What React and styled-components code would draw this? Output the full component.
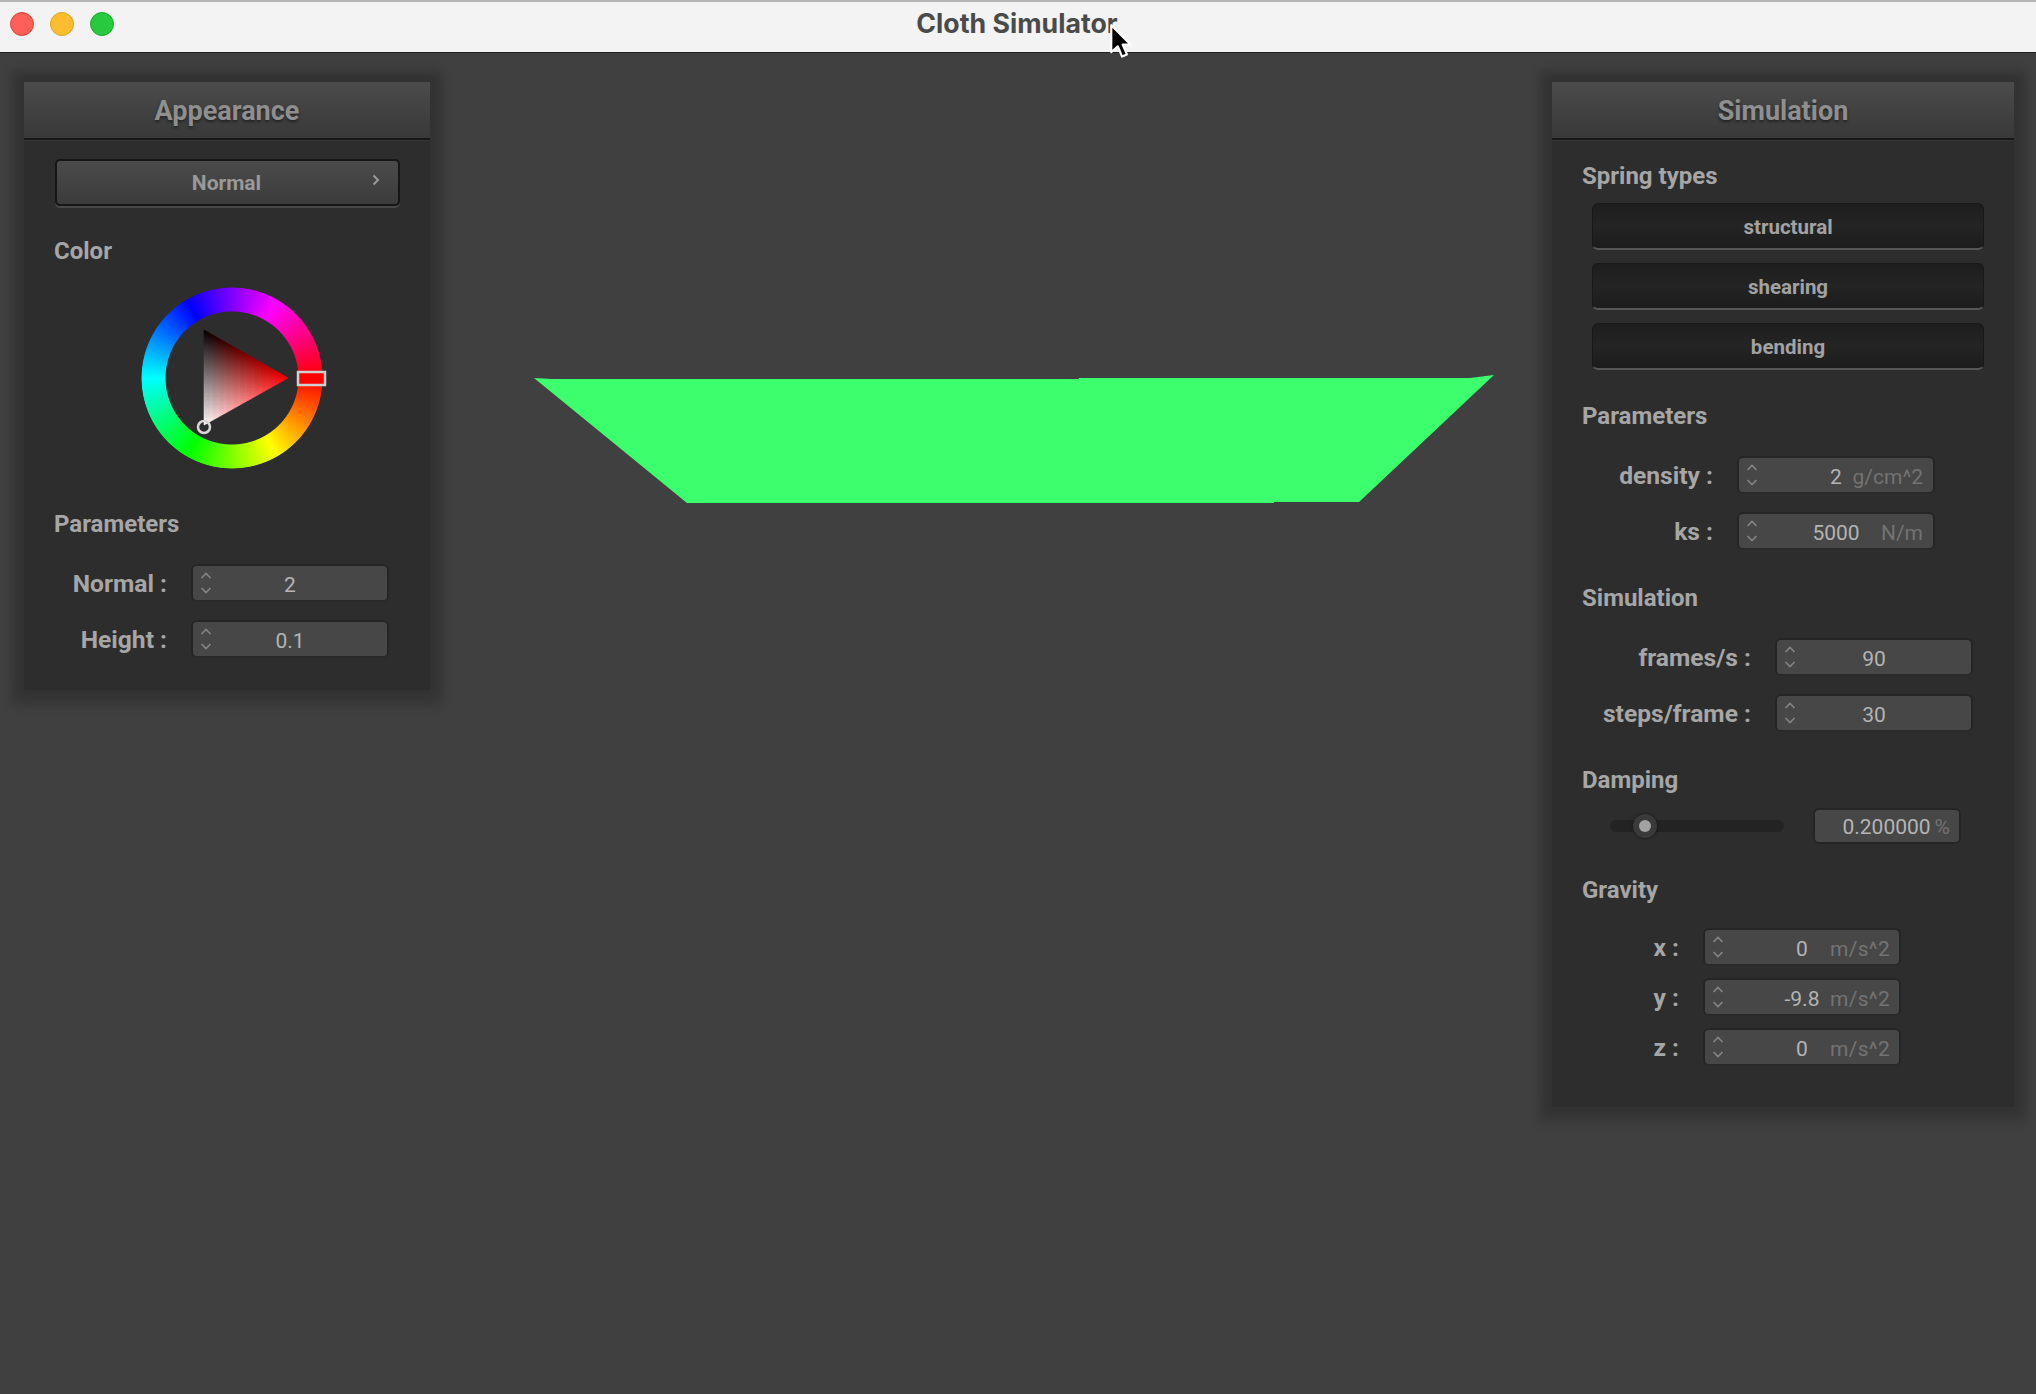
import React from "react";
import styled, { createGlobalStyle } from "styled-components";

const Global = createGlobalStyle`
  html, body { margin: 0; padding: 0; background: #404040; }
  body { font-family: Roboto, "Liberation Sans", sans-serif; }
`;

const Screen = styled.div`
  position: relative;
  width: 2036px;
  height: 1394px;
  overflow: hidden;
  background: #404040;
`;

const TitleBar = styled.header`
  position: relative;
  box-sizing: border-box;
  height: 53px;
  display: flex;
  align-items: center;
  justify-content: center;
  background: #f3f3f3;
  border-top: 2px solid #b4b4b4;
  border-bottom: 1px solid #1e1e1e;
`;

const Lights = styled.div`
  position: absolute;
  left: 10px;
  top: 10px;
  display: flex;
  gap: 16px;
`;

const Light = styled.span`
  width: 24px;
  height: 24px;
  box-sizing: border-box;
  border-radius: 50%;
  background: ${(p) => p.$color};
  border: 1px solid ${(p) => p.$edge};
`;

const WindowTitle = styled.h1`
  margin: 0 2px 9px 0;
  font: 700 26.7px/30px Inter, "Liberation Sans", sans-serif;
  color: #4a4a4a;
`;

const Viewport = styled.main`
  position: relative;
  height: 1341px;
  box-sizing: border-box;
  padding: 29px 22px 0 24px;
  display: flex;
  justify-content: space-between;
  align-items: flex-start;
`;

const Cloth = styled.svg`
  position: absolute;
  left: 0;
  top: 0;
  width: 2036px;
  height: 1341px;
`;

const Panel = styled.section`
  position: relative;
  width: ${(p) => p.$width}px;
  background: #2d2d2d;
  border-radius: 2px;
  box-shadow: 0 0 8px 7px rgba(0, 0, 0, 0.11), 0 2px 9px 15px rgba(0, 0, 0, 0.12);
`;

const PanelHeader = styled.h2`
  box-sizing: border-box;
  margin: 0;
  height: 58px;
  padding-top: 2px;
  display: flex;
  align-items: center;
  justify-content: center;
  background: linear-gradient(#4b4b4b, #393939);
  border-bottom: 2px solid #171717;
  box-shadow: 0 1px 0 #373737;
  font: 700 27px/1 Roboto, sans-serif;
  color: #8f8f8f;
  text-shadow: 0 2px 3px #222;
`;

const PanelBody = styled.div`
  padding: ${(p) => p.$top}px 31px ${(p) => p.$bottom}px;
`;

const SectionLabel = styled.div`
  margin: ${(p) => p.$top}px 0 ${(p) => p.$bottom}px -1px;
  font: 700 24px/26px Roboto, sans-serif;
  color: #a6a6a6;
`;

const Popup = styled.div`
  position: relative;
  box-sizing: border-box;
  width: 345px;
  height: 47px;
  padding: 2px 2px 0 0;
  display: flex;
  align-items: center;
  justify-content: center;
  border: 2px solid #161616;
  border-radius: 5px;
  background: linear-gradient(#4b4b4b, #3b3b3b);
  box-shadow: 0 2px 0 #484848;
  font: 700 21px/1 Roboto, sans-serif;
  color: #999;
`;

const PopupChevron = styled.svg`
  position: absolute;
  right: 18px;
  top: 13px;
  width: 8px;
  height: 12px;
`;

const WheelBox = styled.div`
  position: relative;
  width: 182px;
  height: 182px;
  margin-left: 86px;
`;

const Ring = styled.div`
  position: absolute;
  inset: 0;
  border-radius: 50%;
  background: conic-gradient(from 90deg, #f00, #ff0, #0f0, #0ff, #00f, #f0f, #f00);
  -webkit-mask: radial-gradient(circle closest-side, transparent 66px, #000 67px, #000 90px, transparent 91px);
  mask: radial-gradient(circle closest-side, transparent 66px, #000 67px, #000 90px, transparent 91px);
`;

const WheelArt = styled.svg`
  position: absolute;
  inset: 0;
  overflow: visible;
`;

const Row = styled.div`
  display: flex;
  align-items: center;
  gap: 24px;
  margin-bottom: ${(p) => p.$after || 0}px;
`;

const RowLabel = styled.label`
  width: ${(p) => p.$width + 1}px;
  padding-top: 1px;
  text-align: right;
  font: 700 24.6px/26px Roboto, sans-serif;
  color: #a6a6a6;
  white-space: nowrap;
`;

const Field = styled.div`
  box-sizing: border-box;
  width: ${(p) => p.$width || 198}px;
  height: ${(p) => p.$height || 38}px;
  padding: 0 10px;
  display: grid;
  grid-template-columns: 1fr auto 1fr;
  align-items: center;
  background: #474747;
  border: 2px solid #252525;
  border-bottom-color: #2a2a2a;
  border-radius: 6px;
  font: 400 21px/1 Roboto, sans-serif;
  color: #b4b4b4;
`;

const Spinner = styled.svg`
  width: 12px;
  height: 24px;
  margin-left: -3px;
`;

const Value = styled.span`
  padding-top: 4px;
`;

const Unit = styled.span`
  justify-self: end;
  padding-top: 4px;
  margin-right: ${(p) => (p.$spread ? -1 : 0)}px;
  letter-spacing: ${(p) => p.$spread || 0}px;
  color: #737373;
`;

const SpringButton = styled.button`
  display: block;
  box-sizing: border-box;
  width: 392px;
  height: 47px;
  margin: 0 0 13px 9px;
  padding: 2px 0 0;
  background: linear-gradient(#1e1e1e, #242424 50%, #1c1c1c);
  border: 1px solid #181818;
  border-bottom: 2px solid #565656;
  border-radius: 6px;
  font: 700 20.5px/1 Roboto, sans-serif;
  color: #a2a2a2;
  &:last-of-type { margin-bottom: 0; }
`;

const SliderRow = styled.div`
  display: flex;
  align-items: center;
  margin-left: 27px;
  gap: 29px;
`;

const Track = styled.div`
  position: relative;
  width: 174px;
  height: 12px;
  border-radius: 6px;
  background: #232323;
`;

const Thumb = styled.span`
  position: absolute;
  left: 23px;
  top: -6px;
  box-sizing: border-box;
  width: 24px;
  height: 24px;
  display: grid;
  place-items: center;
  border-radius: 50%;
  background: #3a3a3a;
  box-shadow: 0 0 3px #151515;
  &::after {
    content: "";
    width: 12px;
    height: 12px;
    border-radius: 50%;
    background: #a2a2a2;
  }
`;

const PercentField = styled.div`
  box-sizing: border-box;
  width: 148px;
  height: 36px;
  padding: 3px 9px 0;
  display: flex;
  justify-content: flex-end;
  align-items: center;
  gap: 4px;
  background: #474747;
  border: 2px solid #252525;
  border-radius: 6px;
  font: 400 21px/1 Roboto, sans-serif;
  color: #b4b4b4;
`;

const Percent = styled.span`
  color: #737373;
`;

const Cursor = styled.svg`
  position: absolute;
  left: 1109px;
  top: 23px;
  width: 24px;
  height: 39px;
`;

const triangleCells = () => {
  const K = [63, 43], R = [147, 91], W = [63, 138];
  const n = 36;
  const cells = [];
  const at = (i, j) => {
    const a = i / n, b = j / n, c = 1 - a - b;
    return [K[0] * c + R[0] * a + W[0] * b, K[1] * c + R[1] * a + W[1] * b];
  };
  const col = (i, j) => {
    const a = i / n, b = j / n;
    return `rgb(${Math.round(255 * (a + b))},${Math.round(255 * b)},${Math.round(255 * b)})`;
  };
  for (let i = 0; i < n; i++) {
    for (let j = 0; j < n - i; j++) {
      const pts = [at(i, j), at(i + 1, j), at(i, j + 1)];
      const fill = col(i + 1 / 3, j + 1 / 3);
      cells.push(<polygon key={`a${i}-${j}`} points={pts.map((p) => p.join(",")).join(" ")} fill={fill} stroke={fill} strokeWidth="0.6" />);
      if (i + j < n - 1) {
        const q = [at(i + 1, j), at(i + 1, j + 1), at(i, j + 1)];
        const f2 = col(i + 2 / 3, j + 2 / 3);
        cells.push(<polygon key={`b${i}-${j}`} points={q.map((p) => p.join(",")).join(" ")} fill={f2} stroke={f2} strokeWidth="0.6" />);
      }
    }
  }
  return cells;
};

const Stepper = () => (
  <Spinner viewBox="0 0 12 24" fill="none" stroke="#858585" strokeWidth="1.6">
    <path d="M1.5 7 L6 2.5 L10.5 7" />
    <path d="M1.5 17 L6 21.5 L10.5 17" />
  </Spinner>
);

const NumberField = ({ value, unit, spread }) => (
  <Field>
    <Stepper />
    <Value>{value}</Value>
    {unit ? <Unit $spread={spread}>{unit}</Unit> : <span />}
  </Field>
);

const ParamRow = ({ label, labelWidth, after, value, unit, spread }) => (
  <Row $after={after}>
    <RowLabel $width={labelWidth}>{label}</RowLabel>
    <NumberField value={value} unit={unit} spread={spread} />
  </Row>
);

export default function App() {
  return (
    <Screen>
      <Global />
      <TitleBar>
        <Lights>
          <Light $color="#ff5f57" $edge="#e0443e" />
          <Light $color="#febc2e" $edge="#dea123" />
          <Light $color="#28c840" $edge="#1aab29" />
        </Lights>
        <WindowTitle>Cloth Simulator</WindowTitle>
      </TitleBar>
      <Viewport>
        <Cloth viewBox="0 0 2036 1341">
          <polygon
            fill="#3cff6e"
            points="534,325 552,326 1079,326 1079,325 1470,325 1494,322 1359,449 1274,449 1274,450 687,450"
          />
        </Cloth>
        <Panel $width={406}>
          <PanelHeader>Appearance</PanelHeader>
          <PanelBody $top={19} $bottom={32}>
            <Popup>
              Normal
              <PopupChevron viewBox="0 0 8 12" fill="none" stroke="#9a9a9a" strokeWidth="2">
                <path d="M1.5 1.5 L6 6 L1.5 10.5" />
              </PopupChevron>
            </Popup>
            <SectionLabel $top={32} $bottom={23}>Color</SectionLabel>
            <WheelBox>
              <Ring />
              <WheelArt width="182" height="182" viewBox="0 0 182 182">
                {triangleCells()}
                <circle cx="63" cy="140" r="6" fill="none" stroke="#d8d8d8" strokeWidth="2.5" />
                <rect x="157" y="85" width="27" height="13" fill="#f00" stroke="#d0d0d0" strokeWidth="2.5" />
              </WheelArt>
            </WheelBox>
            <SectionLabel $top={42} $bottom={27}>Parameters</SectionLabel>
            <ParamRow label="Normal :" labelWidth={111} value="2" after={18} />
            <ParamRow label="Height :" labelWidth={111} value="0.1" />
          </PanelBody>
        </Panel>
        <Panel $width={462}>
          <PanelHeader>Simulation</PanelHeader>
          <PanelBody $top={23} $bottom={41}>
            <SectionLabel $top={0} $bottom={14}>Spring types</SectionLabel>
            <SpringButton>structural</SpringButton>
            <SpringButton>shearing</SpringButton>
            <SpringButton>bending</SpringButton>
            <SectionLabel $top={33} $bottom={27}>Parameters</SectionLabel>
            <ParamRow label="density :" labelWidth={129} value="2" unit="g/cm^2" after={18} />
            <ParamRow label="ks :" labelWidth={129} value="5000" unit="N/m" />
            <SectionLabel $top={35} $bottom={27}>Simulation</SectionLabel>
            <ParamRow label="frames/s :" labelWidth={167} value="90" after={18} />
            <ParamRow label="steps/frame :" labelWidth={167} value="30" />
            <SectionLabel $top={35} $bottom={15}>Damping</SectionLabel>
            <SliderRow>
              <Track><Thumb /></Track>
              <PercentField>0.200000<Percent>%</Percent></PercentField>
            </SliderRow>
            <SectionLabel $top={33} $bottom={25}>Gravity</SectionLabel>
            <ParamRow label="x :" labelWidth={95} value="0" unit="m/s^2" spread={0.3} after={12} />
            <ParamRow label="y :" labelWidth={95} value="-9.8" unit="m/s^2" spread={0.3} after={12} />
            <ParamRow label="z :" labelWidth={95} value="0" unit="m/s^2" spread={0.3} />
          </PanelBody>
        </Panel>
      </Viewport>
      <Cursor viewBox="0 0 22 36">
        <path
          d="M2 2 L2 27 L8 21.5 L12 31 L16.5 29 L12.5 20 L20 20 Z"
          fill="#000"
          stroke="#fff"
          strokeWidth="2"
          strokeLinejoin="round"
        />
      </Cursor>
    </Screen>
  );
}
